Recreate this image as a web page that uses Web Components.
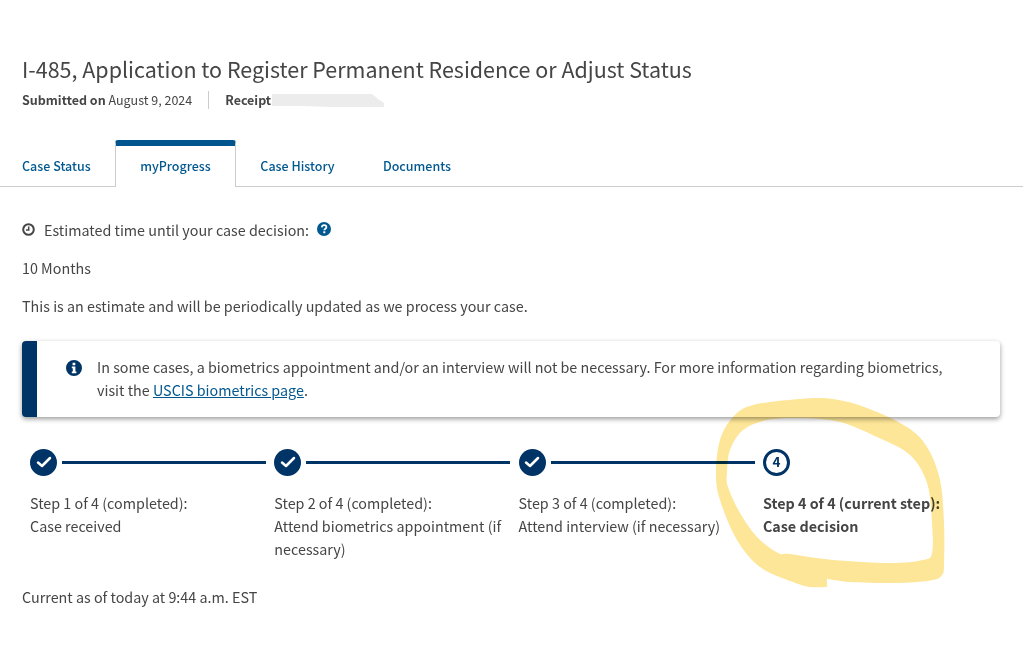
<!DOCTYPE html>
<html lang="en"><head><meta charset="utf-8"><title>myProgress</title>
<style>
html,body{margin:0;padding:0;background:#fff}
body{font-family:"Noto Sans CJK SC","Open Sans",sans-serif;color:#454545;font-size:14.33px;width:1023px;height:662px;overflow:hidden;position:relative}
</style></head><body>
<case-page></case-page>
<script>
const FONT='"Noto Sans CJK SC","Open Sans",sans-serif';
class CaseHeader extends HTMLElement{constructor(){super();this.attachShadow({mode:'open'}).innerHTML=`<style>
:host{display:block;padding:54px 22px 0}
h1{margin:0;font:400 21.47px/30px ${FONT};color:#454545;white-space:nowrap}
.meta{display:flex;align-items:center;margin-top:5.5px;height:20px;font-size:12.5px;line-height:20px;white-space:nowrap}
b{font-weight:700}
.sub{padding-right:16px;border-right:1px solid #ccc;height:18px;line-height:18px}
.rc{padding-left:16px;display:flex;align-items:center}
svg{display:block;margin-left:1px;position:relative;top:1px}
</style><h1><slot name="title"></slot></h1><div class="meta"><span class="sub"><b>Submitted on</b> August 9, 2024</span><span class="rc"><b>Receipt</b><svg width="113" height="16" viewBox="0 0 113 16"><path d="M0 1H100L106 6 112 10V14H60L30 13H0Z" fill="#ececec"/></svg></span></div>`}}
customElements.define('case-header',CaseHeader);
class CaseTabs extends HTMLElement{constructor(){super();this.attachShadow({mode:'open'}).innerHTML=`<style>
:host{display:flex;margin-top:30px;height:46px;border-bottom:1px solid #ccc;padding-left:22px;font-size:12.5px;font-weight:500;color:#00588f;box-sizing:content-box}
.t{display:flex;align-items:center;justify-content:center;padding-top:6px;box-sizing:border-box;height:46px;white-space:nowrap}
.a{width:121px;height:47px;background:#fff;border:1px solid #ccc;border-top:6px solid #00558f;border-bottom:0;border-radius:3px 3px 0 0;padding-top:0;padding-bottom:2px;margin-bottom:-1px;box-sizing:border-box}
.s1{width:93px;justify-content:flex-start}.s3{width:123px}.s4{width:116px}
</style><div class="t s1">Case Status</div><div class="t a">myProgress</div><div class="t s3">Case History</div><div class="t s4">Documents</div>`}}
customElements.define('case-tabs',CaseTabs);
class InfoAlert extends HTMLElement{constructor(){super();this.attachShadow({mode:'open'}).innerHTML=`<style>
:host{display:flex;margin:0 23px 0 22px;height:76px;background:#fff;border-left:15px solid #003366;border-radius:4px;box-shadow:0 2px 5px rgba(0,0,0,.4);box-sizing:border-box}
svg{flex:none;width:16px;height:16px;margin:19px 15px 0 29px}
p{margin:14px 50px 0 0;font-size:14.33px;line-height:23px;color:#454545}
</style><svg viewBox="0 0 16 16"><path fill="#003366" fill-rule="evenodd" d="M8 0a8 8 0 1 0 0 16A8 8 0 0 0 8 0ZM6.600 2.800h2.700v2.400H6.600ZM5.800 6.500h3.600v5h1v1.700H5.800v-1.700h1V8.200H5.800Z"/></svg><p><slot></slot></p>`}}
customElements.define('info-alert',InfoAlert);
class StepItem extends HTMLElement{
connectedCallback(){const n=this.getAttribute('n'),cur=this.hasAttribute('current'),last=this.hasAttribute('last');
this.attachShadow({mode:'open'}).innerHTML=`<style>
:host{display:block;box-sizing:border-box;width:244.3px;flex:none;font-size:14.33px;line-height:23px;color:#454545}
.h{display:flex;align-items:center;height:27px;gap:5px}
.c{width:27px;height:27px;flex:none;box-sizing:border-box;border-radius:50%;background:${cur?'#fff':'#003366'};border:${cur?'3px solid #003366':'0'};display:flex;align-items:center;justify-content:center;color:#003366;font-size:13.5px;font-weight:700;line-height:1}
.l{height:3px;width:204px;background:#003366;${last?'display:none':''}}
.x{margin-top:15.5px;padding-right:8px;${cur?'font-weight:700':''}}
svg{width:16px;height:12px;display:block}
</style><div class="h"><div class="c">${cur?n:'<svg viewBox="0 0 16 12"><path d="M2 6.500 6 10 14 2" fill="none" stroke="#fff" stroke-width="2.500" stroke-linecap="round" stroke-linejoin="round"/></svg>'}</div><div class="l"></div></div><div class="x"><slot></slot></div>`}}
customElements.define('step-item',StepItem);
class StepList extends HTMLElement{constructor(){super();this.attachShadow({mode:'open'}).innerHTML=`<style>:host{display:flex;margin:32px 0 0 30px}</style><slot></slot>`}}
customElements.define('step-list',StepList);
class HighlightMark extends HTMLElement{constructor(){super();
const o=[[733,417],[753,405],[800,399],[833,399],[867,408],[907,427],[927,447],[940,480],[944,523],[944,565],[942,575],[933,580],[900,583],[850,582],[828,579],[827,580],[827,587],[826,587],[810,587],[793,582],[760,567],[737,540],[720,500],[716,473],[720,440]];
const i=[[727,473],[730,450],[743,430],[767,420],[800,418],[840,422],[877,437],[910,455],[927,483],[932,523],[932,553],[923,560],[890,563],[833,560],[790,554],[778,553],[757,537],[740,513],[728,487]];
const sm=p=>{const n=p.length,f=v=>v.toFixed(1);let d=`M${p[0][0]} ${p[0][1]}`;for(let k=0;k<n;k++){const a=p[(k-1+n)%n],b=p[k],c=p[(k+1)%n],e=p[(k+2)%n];d+=`C${f(b[0]+(c[0]-a[0])/6)} ${f(b[1]+(c[1]-a[1])/6)} ${f(c[0]-(e[0]-b[0])/6)} ${f(c[1]-(e[1]-b[1])/6)} ${c[0]} ${c[1]}`}return d+'Z'};
this.attachShadow({mode:'open'}).innerHTML=`<style>:host{position:absolute;left:0;top:0;width:1023px;height:662px;pointer-events:none}svg{display:block;mix-blend-mode:multiply}</style><svg width="1023" height="662"><path fill="#fde697" fill-rule="evenodd" d="${sm(o)}${sm(i)}"/></svg>`}}
customElements.define('highlight-mark',HighlightMark);
class CasePage extends HTMLElement{constructor(){super();this.attachShadow({mode:'open'}).innerHTML=`<style>
:host{display:block;color:#454545}
p{margin:0;font-size:14.33px;line-height:20px;padding-left:22px}
.est{display:flex;align-items:center;margin-top:32.5px;padding-left:22px;height:20px;font-size:14.33px;white-space:nowrap}
.est svg{flex:none}
</style>
<case-header><span slot="title">I-485, Application to Register Permanent Residence or Adjust Status</span></case-header>
<case-tabs></case-tabs>
<div class="est"><svg width="13" height="13" viewBox="0 0 13 13" style="margin-right:9px"><circle cx="6.500" cy="6.500" r="5.300" fill="none" stroke="#454545" stroke-width="2"/><path d="M6.700 3.500V7H4" fill="none" stroke="#454545" stroke-width="1.500"/></svg>Estimated time until your case decision:<svg width="14" height="14" viewBox="0 0 14 14" style="margin-left:7.500px"><circle cx="7" cy="7" r="7" fill="#00588f"/><path d="M4.800 5.300C5 3.800 6 3.200 7.100 3.200 8.400 3.200 9.400 4 9.400 5.200 9.400 6.700 7.300 6.700 7.300 8.300" fill="none" stroke="#fff" stroke-width="1.700"/><rect x="6.300" y="9.300" width="2" height="1.900" fill="#fff"/></svg></div>
<p style="margin-top:19px">10 Months</p>
<p style="margin-top:17.500px;margin-bottom:25px">This is an estimate and will be periodically updated as we process your case.</p>
<info-alert>In some cases, a biometrics appointment and/or an interview will not be necessary. For more information regarding biometrics,<br>visit the <a href="#" style="color:#00588f">USCIS biometrics page</a>.</info-alert>
<step-list>
<step-item n="1">Step 1 of 4 (completed):<br>Case received</step-item>
<step-item n="2">Step 2 of 4 (completed):<br>Attend biometrics appointment (if necessary)</step-item>
<step-item n="3">Step 3 of 4 (completed):<br>Attend interview (if necessary)</step-item>
<step-item n="4" current last>Step 4 of 4 (current step):<br>Case decision</step-item>
</step-list>
<p style="margin-top:26.5px">Current as of today at 9:44 a.m. EST</p>
<highlight-mark></highlight-mark>`}}
customElements.define('case-page',CasePage);
</script>
</body></html>
